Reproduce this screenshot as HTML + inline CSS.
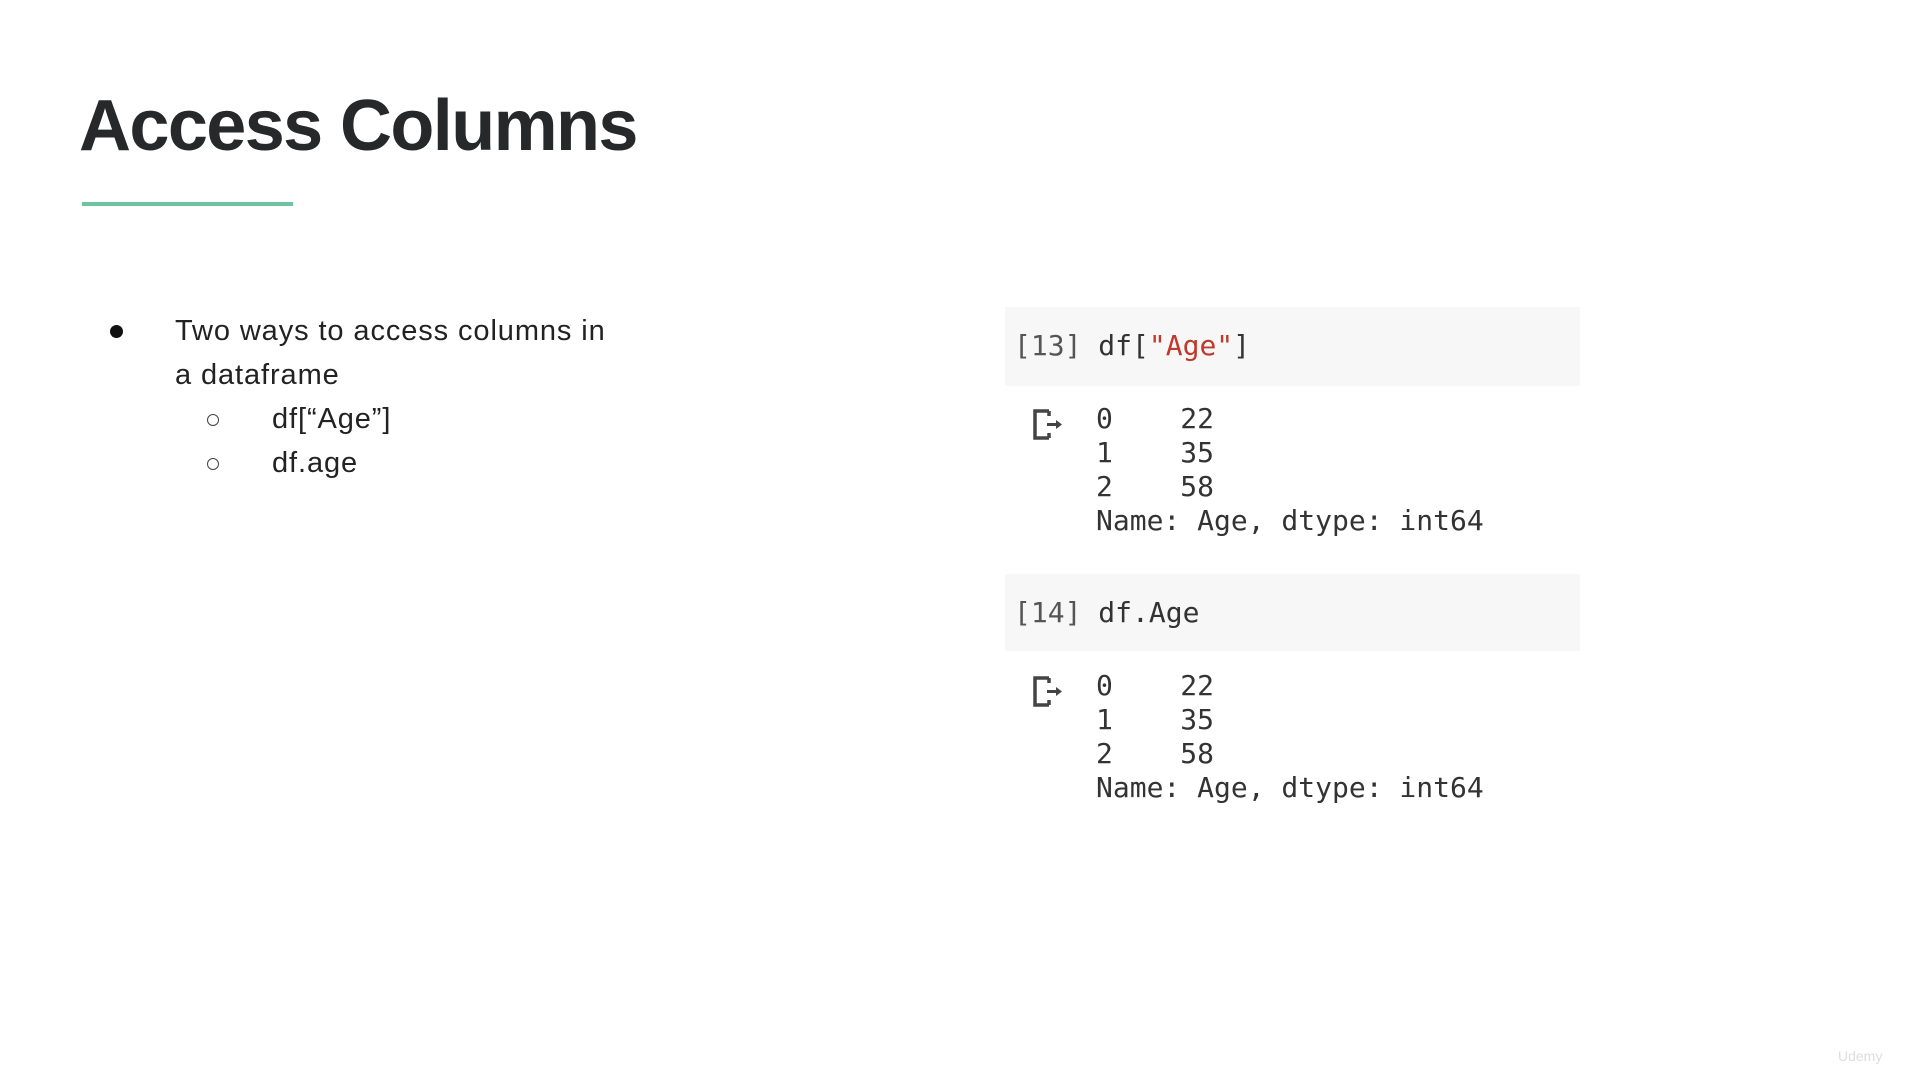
<!DOCTYPE html>
<html><head><meta charset="utf-8"><style>
body{margin:0;width:1920px;height:1080px;background:#fff;position:relative;overflow:hidden;font-family:"Liberation Sans",sans-serif}
.a{position:absolute;white-space:pre}
h1{position:absolute;left:79px;top:85px;margin:0;font-size:72px;font-weight:bold;color:#26282a;letter-spacing:-1.6px}
.ul{position:absolute;left:82px;top:202px;width:211px;height:4px;background:#6cc4a1}
.t{font-size:29px;color:#222;letter-spacing:0.9px;line-height:1}
.m{font-family:"DejaVu Sans Mono","Liberation Mono",monospace;font-size:28px;color:#333;line-height:1}
.box{position:absolute;left:1005px;width:575px;background:#f7f7f7}
</style></head><body>
<h1>Access Columns</h1>
<div class="ul"></div>
<div class="a" style="left:110px;top:325px;width:13px;height:13px;border-radius:50%;background:#111"></div>
<div class="a t" style="left:175px;top:317px">Two ways to access columns in</div>
<div class="a t" style="left:175px;top:361px">a dataframe</div>
<div class="a" style="left:207px;top:414px;width:10px;height:10px;border-radius:50%;border:1.5px solid #444"></div>
<div class="a t" style="left:272px;top:405px">df[“Age”]</div>
<div class="a" style="left:207px;top:458px;width:10px;height:10px;border-radius:50%;border:1.5px solid #444"></div>
<div class="a t" style="left:272px;top:449px">df.age</div>

<div class="box" style="top:307px;height:79px"></div>
<div class="box" style="top:574px;height:77px"></div>
<div class="a m" style="left:1014px;top:332px"><span style="color:#555">[13]</span> df[<span style="color:#c0392b">"Age"</span>]</div>
<div class="a m" style="left:1014px;top:599px"><span style="color:#555">[14]</span> df.Age</div>

<svg class="a" style="left:1030px;top:405px" width="36" height="36" viewBox="0 0 36 36"><path d="M19 6H5v27h14" fill="none" stroke="#444" stroke-width="3.5"/><path d="M19 6v5M19 33v-5" stroke="#444" stroke-width="3.5"/><path d="M17 19.5h10" stroke="#444" stroke-width="3"/><path d="M26 15l6 4.5-6 4.5z" fill="#444"/></svg>
<svg class="a" style="left:1030px;top:672px" width="36" height="36" viewBox="0 0 36 36"><path d="M19 6H5v27h14" fill="none" stroke="#444" stroke-width="3.5"/><path d="M19 6v5M19 33v-5" stroke="#444" stroke-width="3.5"/><path d="M17 19.5h10" stroke="#444" stroke-width="3"/><path d="M26 15l6 4.5-6 4.5z" fill="#444"/></svg>

<div class="a m" style="left:1096px;top:402px;line-height:34px">0    22
1    35
2    58
Name: Age, dtype: int64</div>
<div class="a m" style="left:1096px;top:669px;line-height:34px">0    22
1    35
2    58
Name: Age, dtype: int64</div>
<div class="a" style="left:1838px;top:1048px;font-size:14px;color:#ddd">Udemy</div>
</body></html>
